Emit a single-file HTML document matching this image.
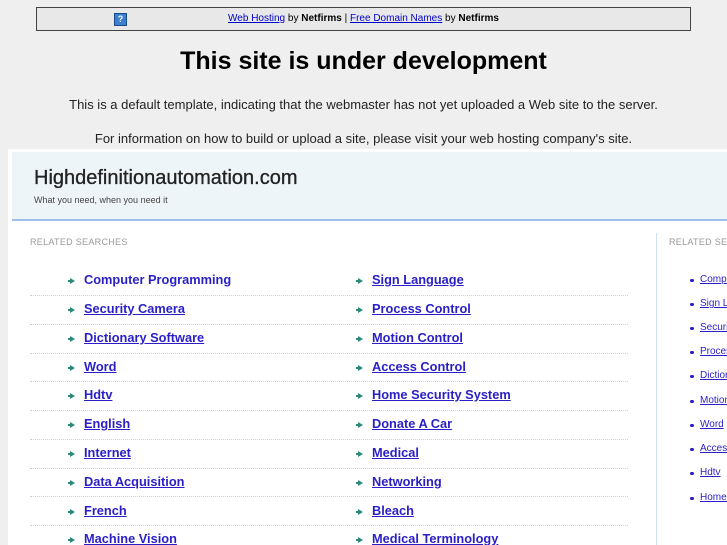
<!DOCTYPE html><html><head><style>
html{overflow:hidden}
body{margin:0;background:#efefef;font-family:"Liberation Sans",sans-serif;width:727px;height:545px;overflow:hidden;position:relative}
.bar{position:absolute;left:36px;top:7px;width:653px;height:22px;background:#e8e8e8;border:1px solid #444;font-size:10px;line-height:22px;text-align:center}
.bar a{color:#00c;text-decoration:underline}
.q{position:absolute;left:77px;top:5px;width:11px;height:11px;background:#3a7fd0;border:1px solid #1b4b8a;color:#fff;font-size:9px;line-height:11px;font-weight:bold}
h1{position:absolute;top:47px;left:0;width:727px;text-align:center;margin:0;font-size:25px;color:#000}
.p{position:absolute;left:0;width:727px;text-align:center;font-size:13px;color:#222}
.panel{position:absolute;left:8px;top:149px;width:719px;height:396px;background:#fff}
.hd{position:absolute;left:4px;top:3px;width:715px;height:67px;background:#eef5f8;border-bottom:2px solid #9cc0ea}
.hd .t{position:absolute;left:22px;top:15px;font-size:20px;color:#222;-webkit-text-stroke:.3px #222}
.hd .s{position:absolute;left:22px;top:43px;font-size:9px;color:#444}
.rs{position:absolute;top:88px;font-size:9px;color:#999;letter-spacing:.3px;white-space:nowrap}
.vl{position:absolute;left:648px;top:84px;width:1px;height:312px;background:#cfe0f2}
.row{position:absolute;left:30px;width:598px;height:28px;border-bottom:1px dotted #c4d2e2}
.it{position:absolute;font-size:12.8px;font-weight:bold;color:#2a1fc6;text-decoration:underline;white-space:nowrap}
.it:before{content:"";position:absolute;left:-14px;top:6px;border-left:5px solid #2b8a7a;border-top:3px solid transparent;border-bottom:3px solid transparent}
.it:after{content:"";position:absolute;left:-16px;top:8px;width:3px;height:2px;background:#2b8a7a}
.r{position:absolute;left:700px;font-size:10px;color:#2a1fc6;text-decoration:underline;white-space:nowrap}
.r:before{content:"";position:absolute;left:-10px;top:5px;width:4px;height:3px;border-radius:2px;background:#2a1fc6}
</style></head><body>
<div class="bar"><span class="q">?</span><a>Web Hosting</a> by <b>Netfirms</b> | <a>Free Domain Names</a> by <b>Netfirms</b></div>
<h1>This site is under development</h1>
<div class="p" style="top:97px">This is a default template, indicating that the webmaster has not yet uploaded a Web site to the server.</div>
<div class="p" style="top:131px">For information on how to build or upload a site, please visit your web hosting company's site.</div>
<div class="panel">
<div class="hd"><div class="t">Highdefinitionautomation.com</div><div class="s">What you need, when you need it</div></div>
<div class="rs" style="left:22px">RELATED SEARCHES</div>
<div class="rs" style="left:661px">RELATED SEARCHES</div>
<div class="vl"></div>
</div>
<div class="row" style="top:267px"></div><div class="row" style="top:296px"></div><div class="row" style="top:325px"></div><div class="row" style="top:353px"></div><div class="row" style="top:382px"></div><div class="row" style="top:411px"></div><div class="row" style="top:440px"></div><div class="row" style="top:468px"></div><div class="row" style="top:497px"></div>
<span class="it" style="left:84px;top:272px;text-decoration:none">Computer Programming</span><span class="it" style="left:372px;top:272px">Sign Language</span>
<span class="it" style="left:84px;top:301px">Security Camera</span><span class="it" style="left:372px;top:301px">Process Control</span>
<span class="it" style="left:84px;top:330px">Dictionary Software</span><span class="it" style="left:372px;top:330px">Motion Control</span>
<span class="it" style="left:84px;top:359px">Word</span><span class="it" style="left:372px;top:359px">Access Control</span>
<span class="it" style="left:84px;top:387px">Hdtv</span><span class="it" style="left:372px;top:387px">Home Security System</span>
<span class="it" style="left:84px;top:416px">English</span><span class="it" style="left:372px;top:416px">Donate A Car</span>
<span class="it" style="left:84px;top:445px">Internet</span><span class="it" style="left:372px;top:445px">Medical</span>
<span class="it" style="left:84px;top:474px">Data Acquisition</span><span class="it" style="left:372px;top:474px">Networking</span>
<span class="it" style="left:84px;top:503px">French</span><span class="it" style="left:372px;top:503px">Bleach</span>
<span class="it" style="left:84px;top:531px">Machine Vision</span><span class="it" style="left:372px;top:531px">Medical Terminology</span>
<span class="r" style="top:274px">Computer Programming</span>
<span class="r" style="top:298px">Sign Language</span>
<span class="r" style="top:322px">Security Camera</span>
<span class="r" style="top:346px">Process Control</span>
<span class="r" style="top:370px">Dictionary Software</span>
<span class="r" style="top:395px">Motion Control</span>
<span class="r" style="top:419px">Word</span>
<span class="r" style="top:443px">Access Control</span>
<span class="r" style="top:467px">Hdtv</span>
<span class="r" style="top:492px">Home Security System</span>
</body></html>
